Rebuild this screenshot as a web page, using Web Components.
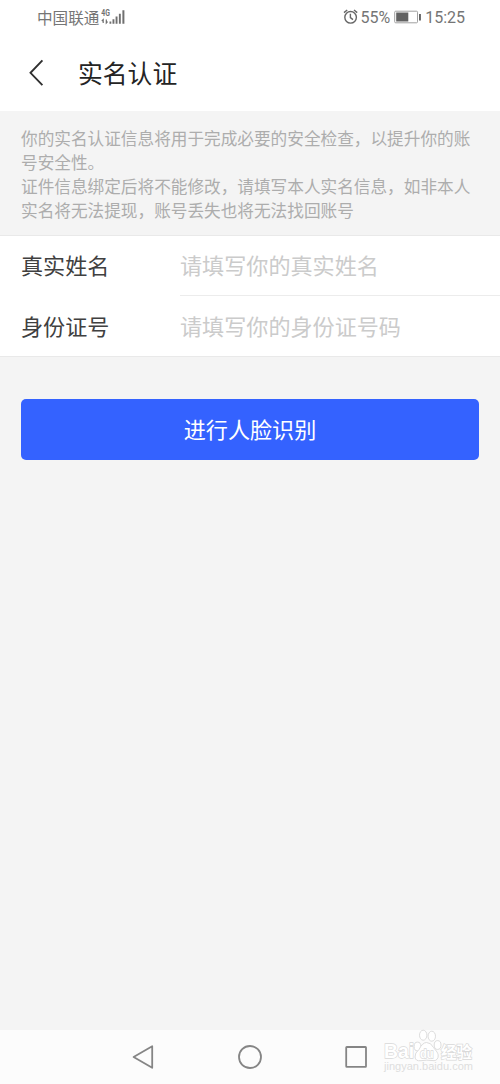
<!DOCTYPE html>
<html lang="zh-CN">
<head>
<meta charset="utf-8">
<title>实名认证</title>
<style>
html,body{margin:0;height:100%}
body{font-family:"Noto Sans CJK SC",sans-serif;background:#f4f4f4;overflow:hidden}
</style>
</head>
<body>
<verify-page></verify-page>
<script>
const define=(name,html)=>customElements.define(name,class extends HTMLElement{
  constructor(){
    super();
    const t=document.createElement('template');
    t.innerHTML=html;
    this.attachShadow({mode:'open'}).append(t.content.cloneNode(true));
  }
});

define('status-bar',`<style>
:host{display:flex;height:35px;box-sizing:border-box;padding:0 35px 1px 37px;align-items:center;justify-content:space-between;color:#757575;background:#fff;font-size:15.6px;line-height:34px}
div{display:flex;align-items:center}
.n{font-family:Roboto,sans-serif;font-size:16px;color:#757575}
.n span{line-height:32px;padding-top:2px}
svg{display:block;flex:none}
</style>
<div><span>中国联通</span>
<svg width="26" height="20" viewBox="0 0 26 20" style="margin-left:2px"><text x=".3" y="8.8" font-family="Roboto" font-weight="700" font-size="8.5" textLength="8.6" lengthAdjust="spacingAndGlyphs" fill="#707070">4G</text><g fill="none" stroke="#707070" stroke-width="1.2"><path d="M2.2 16V12.6L.8 14M5.3 12.6V16L6.6 14.7"/></g><path fill="#707070" d="M8.5 14.4h1.8v2.4H8.5zM11.5 12.2h1.9v4.6h-1.9zM14.6 9.4h1.9v7.4h-1.9zM17.9 6.8h1.9v10h-1.9zM21.4 3.2h2v13.6h-2z"/></svg></div>
<div class="n">
<svg width="16" height="18" viewBox="0 0 16 18"><g fill="none" stroke="#666" stroke-width="1.4"><circle cx="8.6" cy="9.3" r="5.8"/><path d="M8.4 5.8V9.6L11 11.6M2 4.6 5.2 2M15.2 4.6 12 2"/></g></svg>
<span style="margin-left:2px">55%</span>
<svg width="28" height="16" viewBox="0 0 28 16" style="margin:0 3px 0 4px"><rect x=".7" y="2.2" width="22.8" height="11.6" rx="1" fill="none" stroke="#a0a0a0" stroke-width="1"/><path fill="#626262" d="M2.2 3.6H14.3v8.8H2.2zM25 5h1.9v6.4H25z"/></svg>
<span>15:25</span></div>`);

define('nav-header',`<style>
:host{display:flex;align-items:center;height:76px;box-sizing:border-box;padding:0 0 1px 27px;background:#fff;color:#242424;font-size:24.8px;line-height:35px}
svg{display:block;margin-right:33px}
</style>
<svg width="18" height="30" viewBox="0 0 18 30"><path d="M15.4 2.3 3.5 14.8 15.4 27.2" fill="none" stroke="#303030" stroke-width="1.9"/></svg><span><slot></slot></span>`);

define('notice-text',`<style>
:host{display:block;box-sizing:border-box;height:125px;padding:15px 0 0 21px;border-bottom:1px solid #e9e9e9;color:#adadad;font-size:16.65px;line-height:24.1px;white-space:nowrap}
</style><slot></slot>`);

define('form-row',`<style>
:host{display:flex;height:60px;padding-left:21px;background:#fff;font-size:22.1px;line-height:57px}
.l{width:159px;color:#404040}
.v{flex:1;color:#cbcbcb;border-bottom:1px solid var(--line,#ececec)}
</style><div class="l"><slot name="label"></slot></div><div class="v"><slot></slot></div>`);

define('primary-button',`<style>
:host{display:block;margin:42.4px 20.6px 0}
button{display:block;width:100%;height:61px;border:0;border-radius:5px;background:#3462ff;color:#fff;font:22.1px/58px "Noto Sans CJK SC",sans-serif;padding:0 0 3px}
</style><button><slot></slot></button>`);

define('system-nav',`<style>
:host{display:flex;height:54px;background:#fcfcfc;justify-content:center;align-items:center;gap:82px}
svg{display:block}
svg *{fill:none;stroke:#858585;stroke-width:1.8;stroke-linejoin:round}
</style>
<svg width="24" height="26" viewBox="0 0 24 26"><path d="M2.6 13 21.2 2.2V23.8Z"/></svg>
<svg width="26" height="26" viewBox="0 0 26 26"><circle cx="13" cy="13" r="11"/></svg>
<svg width="24" height="26" viewBox="0 0 24 26"><rect x="1.2" y="3" width="19.8" height="19.8" rx=".6"/></svg>`);

define('site-watermark',`<style>
:host{position:absolute;left:380px;top:1026px;width:96px;height:50px}
svg{display:block}
text{paint-order:stroke;stroke:#d8d8d8;stroke-width:1.3;fill:#fff;font-weight:700}
</style>
<svg width="96" height="50" viewBox="0 0 96 50">
<g fill="#fff" stroke="#d8d8d8" stroke-width=".9"><ellipse cx="37.5" cy="20.5" rx="3.4" ry="4.4"/><ellipse cx="43.2" cy="9.2" rx="3.7" ry="5"/><ellipse cx="51.8" cy="10.2" rx="3.7" ry="5"/><ellipse cx="57.6" cy="19" rx="3.4" ry="4.4"/><path d="M46.5 16.5Q51 16.5 53.5 21.5C56 25 59 27 58 31.5Q56.5 35.5 52 34.5Q46.5 33.7 41 34.7Q35.5 35.5 35 31Q34.7 27 39 23.5Q42.5 16.5 46.5 16.5Z"/></g>
<text x="4" y="32" font-family="Liberation Sans" font-size="20" textLength="30" lengthAdjust="spacingAndGlyphs">Bai</text>
<text x="40" y="31.5" font-family="Liberation Sans" font-size="12" textLength="13.5" lengthAdjust="spacingAndGlyphs">du</text>
<text x="61" y="32" font-family="Noto Sans CJK SC" font-size="15.5" textLength="31">经验</text>
<text x="4" y="44" font-family="Liberation Sans" font-size="11" textLength="89" style="stroke:none;fill:#dedede;font-weight:400" lengthAdjust="spacingAndGlyphs">jingyan.baidu.com</text>
</svg>`);

define('verify-page',`<style>
:host{display:flex;flex-direction:column;position:relative;width:500px;height:1084px;background:#f4f4f4}
.fill{flex:1}
form-row.last{--line:#e9e9e9;height:61px;line-height:59px;box-shadow:inset 0 -1px #e9e9e9}
</style>
<status-bar></status-bar>
<nav-header>实名认证</nav-header>
<notice-text>你的实名认证信息将用于完成必要的安全检查，以提升你的账<br>号安全性。<br>证件信息绑定后将不能修改，请填写本人实名信息，如非本人<br>实名将无法提现，账号丢失也将无法找回账号</notice-text>
<form-row><span slot="label">真实姓名</span>请填写你的真实姓名</form-row>
<form-row class="last"><span slot="label">身份证号</span>请填写你的身份证号码</form-row>
<primary-button>进行人脸识别</primary-button>
<div class="fill"></div>
<system-nav></system-nav>
<site-watermark></site-watermark>`);
</script>
</body>
</html>
